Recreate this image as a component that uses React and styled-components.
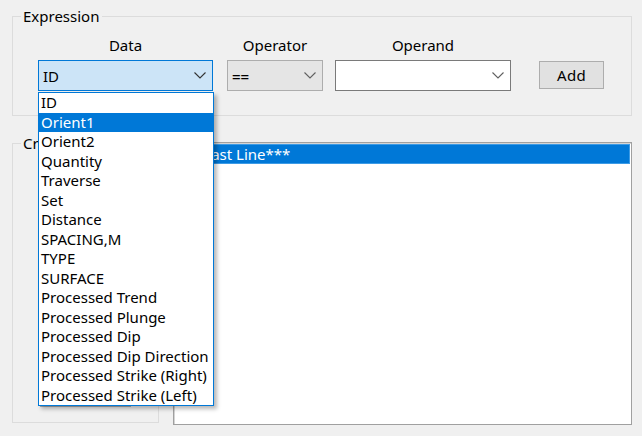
import React from "react";
import styled, { createGlobalStyle } from "styled-components";

const Global = createGlobalStyle`
  html, body {
    margin: 0;
    padding: 0;
    background: #f0f0f0;
  }
  body {
    font-family: "Noto Sans", "Open Sans", sans-serif;
    font-size: 15px;
    color: #000;
  }
`;

const dataItems = [
  "ID",
  "Orient1",
  "Orient2",
  "Quantity",
  "Traverse",
  "Set",
  "Distance",
  "SPACING,M",
  "TYPE",
  "SURFACE",
  "Processed Trend",
  "Processed Plunge",
  "Processed Dip",
  "Processed Dip Direction",
  "Processed Strike (Right)",
  "Processed Strike (Left)",
];

const Window = styled.div`
  width: 642px;
  height: 436px;
  box-sizing: border-box;
  padding: 0 10px 0 12px;
  overflow: hidden;
`;

const Group = styled.fieldset`
  margin: ${(p) => p.$top}px 0 0 0;
  padding: 0;
  border: 1px solid #dcdcdc;
  box-sizing: border-box;
  width: ${(p) => p.$width}px;
  min-width: 0;
  ${(p) => (p.$height ? `height: ${p.$height}px;` : "")}
`;

const Caption = styled.legend`
  margin-left: 8px;
  padding: 0 3px 0 2px;
  line-height: 19px;
  font-size: 15px;
`;

const FieldRow = styled.div`
  display: flex;
  align-items: flex-end;
  padding: 10px 0 24px 25px;
`;

const Field = styled.div`
  position: relative;
  display: flex;
  flex-direction: column;
  align-items: center;
  width: ${(p) => p.$width}px;
  margin-left: ${(p) => p.$ml || 0}px;
`;

const FieldLabel = styled.div`
  line-height: 19px;
  margin-bottom: 5px;
  white-space: nowrap;
`;

const Combo = styled.div`
  width: 100%;
  height: 31px;
  box-sizing: border-box;
  display: flex;
  align-items: center;
  justify-content: space-between;
  padding: 0 6px 0 4px;
  border: 1px solid ${(p) => (p.$variant === "focus" ? "#0078d7" : p.$variant === "flat" ? "#adadad" : "#7a7a7a")};
  background: ${(p) => (p.$variant === "focus" ? "#cce4f7" : p.$variant === "flat" ? "#e5e5e5" : "#ffffff")};
  font-weight: ${(p) => (p.$bold ? 600 : 400)};
`;

const Chevron = ({ color = "#606060" }) => (
  <svg width="12" height="7" viewBox="0 0 12 7">
    <path d="M0.5 0.5 L6 6 L11.5 0.5" fill="none" stroke={color} strokeWidth="1.1" />
  </svg>
);

const Button = styled.button`
  font-family: inherit;
  font-size: 15px;
  width: ${(p) => p.$width}px;
  height: ${(p) => p.$height}px;
  margin: 0 0 ${(p) => p.$mb || 0}px ${(p) => p.$ml || 0}px;
  padding: 0;
  border: 1px solid #adadad;
  background: #e1e1e1;
  color: #000;
  letter-spacing: 0.3px;
`;

const DropList = styled.ul`
  position: absolute;
  top: 100%;
  left: 0;
  margin: 1px 0 0;
  padding: 0;
  list-style: none;
  width: 176px;
  box-sizing: border-box;
  border: 1px solid #0078d7;
  background: #fff;
  box-shadow: 3px 3px 4px rgba(0, 0, 0, 0.28);
  z-index: 5;
`;

const DropItem = styled.li`
  height: 19.5px;
  line-height: 19.5px;
  padding-left: 2px;
  white-space: nowrap;
  overflow: hidden;
  background: ${(p) => (p.$selected ? "#0078d7" : "transparent")};
  color: ${(p) => (p.$selected ? "#fff" : "#000")};
`;

const Lower = styled.div`
  display: flex;
  align-items: flex-start;
`;

const CriteriaBody = styled.div`
  height: 100%;
  display: flex;
  flex-direction: column;
  justify-content: flex-end;
  box-sizing: border-box;
  padding: 0 0 15px 27px;
`;

const ListBox = styled.div`
  width: 461px;
  height: 283px;
  margin: 26px 0 0 14px;
  box-sizing: border-box;
  border: 1px solid #a0a0a0;
  box-shadow: inset 1px 1px 0 #d4d4d4;
  background: #fff;
  padding: 1px 1px;
`;

const ListRow = styled.div`
  height: 20px;
  line-height: 18px;
  box-sizing: border-box;
  padding-left: 3px;
  border: 1px solid ${(p) => (p.$selected ? "#3c9be6" : "transparent")};
  background: ${(p) => (p.$selected ? "#0078d7" : "transparent")};
  color: ${(p) => (p.$selected ? "#fff" : "#000")};
`;

export default function App() {
  return (
    <Window>
      <Global />
      <Group $top={7} $width={620}>
        <Caption>Expression</Caption>
        <FieldRow>
          <Field $width={175}>
            <FieldLabel>Data</FieldLabel>
            <Combo $variant="focus">
              <span>ID</span>
              <Chevron color="#333" />
            </Combo>
            <DropList>
              {dataItems.map((item) => (
                <DropItem key={item} $selected={item === "Orient1"}>
                  {item}
                </DropItem>
              ))}
            </DropList>
          </Field>
          <Field $width={96} $ml={14}>
            <FieldLabel>Operator</FieldLabel>
            <Combo $variant="flat" $bold>
              <span>==</span>
              <Chevron />
            </Combo>
          </Field>
          <Field $width={176} $ml={12}>
            <FieldLabel>Operand</FieldLabel>
            <Combo>
              <span />
              <Chevron />
            </Combo>
          </Field>
          <Button $width={65} $height={28} $ml={28} $mb={2}>
            Add
          </Button>
        </FieldRow>
      </Group>
      <Lower>
        <Group $top={18} $width={147} $height={289}>
          <Caption>Criteria</Caption>
          <CriteriaBody>
            <Button $width={91} $height={27} aria-label="Clear" />
          </CriteriaBody>
        </Group>
        <ListBox>
          <ListRow $selected>***Last Line***</ListRow>
        </ListBox>
      </Lower>
    </Window>
  );
}
